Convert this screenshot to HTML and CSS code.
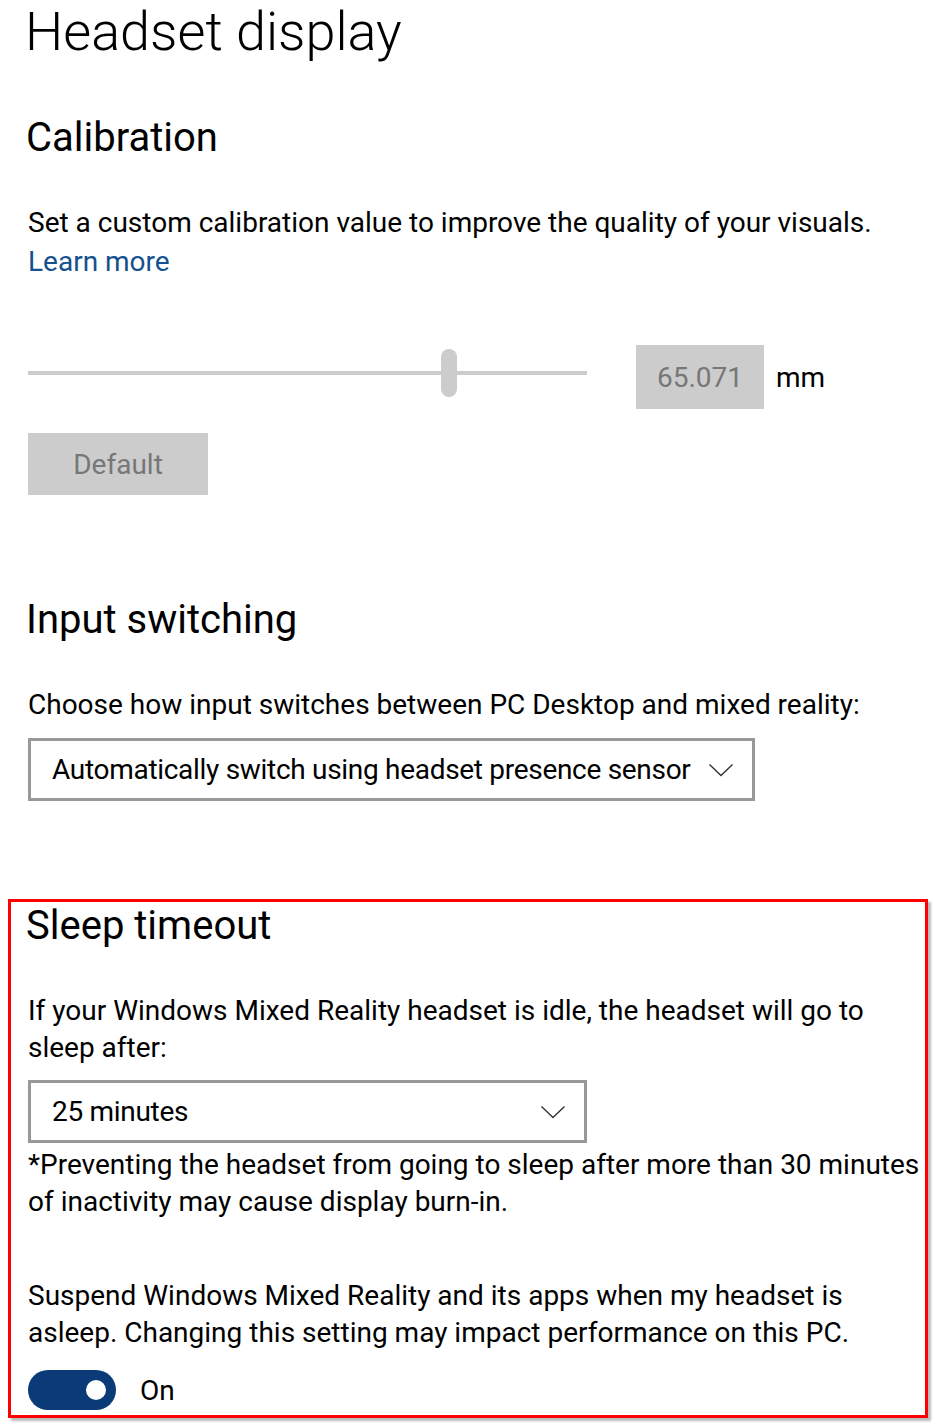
FILE: index.html
```html
<!DOCTYPE html>
<html lang="en">
<head>
    <meta charset="UTF-8">
    <meta name="viewport" content="width=device-width, initial-scale=1.0">
    <title>Headset display</title>
    <link rel="stylesheet" href="styles.css">
</head>
<body>
    <main class="page">
        <h1 class="title">Headset display</h1>

        <!-- Calibracion -->
        <section class="group calibration">
            <h2 class="group-title">Calibration</h2>
            <p class="text">Set a custom calibration value to improve the quality of your visuals.</p>
            <a class="link" href="#">Learn more</a>

            <div class="slider-row">
                <div class="slider">
                    <span class="track track-left"></span>
                    <span class="thumb"></span>
                    <span class="track track-right"></span>
                </div>
                <div class="value-box">65.071</div>
                <span class="unit">mm</span>
            </div>

            <button class="btn-default">Default</button>
        </section>

        <!-- Input switching -->
        <section class="group input">
            <h2 class="group-title">Input switching</h2>
            <p class="text">Choose how input switches between PC Desktop and mixed reality:</p>
            <div class="select select-wide">
                <span>Automatically switch using headset presence sensor</span>
                <svg class="chevron" width="26" height="14" viewBox="0 0 26 14"><path d="M1.5 1.5 L13 12.5 L24.5 1.5" fill="none" stroke="#333" stroke-width="1.4"/></svg>
            </div>
        </section>

        <!-- Sleep timeout (marcado en rojo) -->
        <section class="group sleep">
            <h2 class="group-title">Sleep timeout</h2>
            <p class="text">If your Windows Mixed Reality headset is idle, the headset will go to sleep after:</p>
            <div class="select select-short">
                <span>25 minutes</span>
                <svg class="chevron" width="26" height="14" viewBox="0 0 26 14"><path d="M1.5 1.5 L13 12.5 L24.5 1.5" fill="none" stroke="#333" stroke-width="1.4"/></svg>
            </div>
            <p class="text note">*Preventing the headset from going to sleep after more than 30 minutes of inactivity may cause display burn-in.</p>

            <p class="text suspend">Suspend Windows Mixed Reality and its apps when my headset is asleep. Changing this setting may impact performance on this PC.</p>
            <div class="toggle-row">
                <span class="toggle"><span class="knob"></span></span>
                <span class="toggle-label">On</span>
            </div>
        </section>
    </main>
</body>
</html>
```

FILE: styles.css
```css
body {
    margin: 0;
    background: #fff;
    color: #000;
    font-family: Roboto, "Open Sans", Arial, sans-serif;
}

.page {
    padding: 0 8px 9px 8px;
}

.title {
    margin: 0;
    padding-left: 17px;
    font-size: 54px;
    font-weight: 300;
    line-height: 64px;
}

.group {
    padding-left: 20px;
}

.calibration {
    margin-top: 50px;
}

.input {
    margin-top: 101px;
}

.group-title {
    margin: 0 0 42px -2px;
    font-size: 40px;
    font-weight: 400;
    line-height: 48px;
}

.text {
    margin: 0;
    font-size: 28px;
    line-height: 37px;
}

.link {
    display: block;
    margin-top: 2px;
    font-size: 28px;
    line-height: 37px;
    color: #13518f;
    text-decoration: none;
}

/* Slider */
.slider-row {
    display: flex;
    align-items: center;
    margin-top: 65px;
}

.slider {
    display: flex;
    align-items: center;
    align-self: flex-start;
    width: 559px;
    height: 48px;
    margin-top: 4px;
}

.track {
    height: 4px;
    background: #ccc;
}

.track-left {
    width: 413px;
}

.track-right {
    flex: 1;
}

.thumb {
    width: 16px;
    height: 48px;
    border-radius: 8px;
    background: #ccc;
}

.value-box {
    width: 128px;
    height: 64px;
    margin-left: 49px;
    display: flex;
    align-items: center;
    justify-content: center;
    background: #ccc;
    color: #777;
    font-size: 28px;
}

.unit {
    margin-left: 12px;
    font-size: 28px;
}

.btn-default {
    display: block;
    width: 180px;
    height: 62px;
    margin-top: 24px;
    border: 0;
    background: #ccc;
    color: #777;
    font-family: inherit;
    font-size: 28px;
}

/* Desplegables */
.select {
    display: flex;
    align-items: center;
    justify-content: space-between;
    box-sizing: border-box;
    height: 63px;
    border: 3px solid #999;
    padding: 0 18px 0 21px;
    font-size: 28px;
    letter-spacing: -0.3px;
}

.select-wide {
    width: 727px;
    margin-top: 15px;
}

.select-short {
    width: 559px;
    margin-top: 14px;
}

.chevron {
    flex-shrink: 0;
}

/* Recuadro rojo */
.sleep {
    margin-top: 98px;
    padding-left: 17px;
    padding-bottom: 5px;
    border: 3px solid #f00;
    box-shadow: 3px 3px 2px #bbb;
}

.note {
    margin-top: 3px;
}

.suspend {
    margin-top: 57px;
}

.toggle-row {
    display: flex;
    align-items: center;
    gap: 24px;
    margin-top: 19px;
}

.toggle {
    display: flex;
    align-items: center;
    justify-content: flex-end;
    box-sizing: border-box;
    width: 88px;
    height: 40px;
    padding-right: 10px;
    border-radius: 20px;
    background: #0b3a78;
}

.knob {
    width: 20px;
    height: 20px;
    border-radius: 50%;
    background: #fff;
}

.toggle-label {
    font-size: 28px;
}
```
